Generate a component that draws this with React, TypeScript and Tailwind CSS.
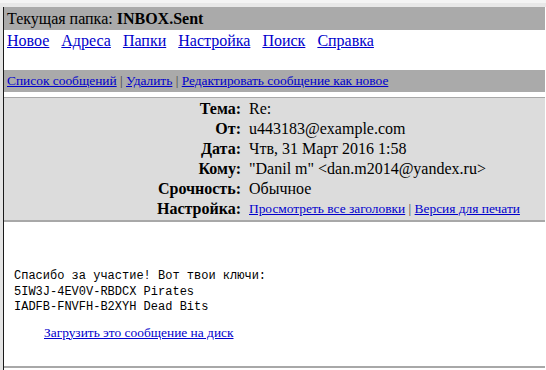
import React from "react";

const serif = { fontFamily: '"Liberation Serif", "Times New Roman", serif' };

function Row({ label, children }: { label: string; children: React.ReactNode }) {
  return (
    <div className="flex h-5 items-center leading-5 pt-[1px]">
      <div className="w-[237px] shrink-0 text-right font-bold">{label}</div>
      <div className="pl-[8px] whitespace-nowrap">{children}</div>
    </div>
  );
}

export default function App() {
  const link = "text-[#0000cc] underline";
  return (
    <div className="w-[546px] h-[370px] bg-white overflow-hidden text-black" style={serif}>
      <div className="h-[7px] bg-[#e8e8e8] border-t-[3px] border-[#f4f4f4]" />
      <div className="flex h-[363px]">
        <div className="w-[3px] bg-[#e4e4e4] shrink-0" />
        <div className="w-[1px] bg-[#1a1a1a] shrink-0" />
        <div className="flex-1 flex flex-col mr-[1px]">
          <div className="h-[23px] bg-[#aaaaaa] pl-[3px] text-[16px] leading-[23px]">
            Текущая папка: <b>INBOX.Sent</b>
          </div>
          <div className="h-[40px] pl-[3px] pt-[2px] text-[16px] leading-[18px] flex gap-[12px]">
            <a className={link}>Новое</a>
            <a className={link}>Адреса</a>
            <a className={link}>Папки</a>
            <a className={link}>Настройка</a>
            <a className={link}>Поиск</a>
            <a className={link}>Справка</a>
          </div>
          <div className="h-[22px] bg-[#aaaaaa] pl-[3px] text-[13.4px] leading-[22px] whitespace-nowrap">
            <a className={link}>Список сообщений</a>
            <span className="text-[#444]"> | </span>
            <a className={link}>Удалить</a>
            <span className="text-[#444]"> | </span>
            <a className={link}>Редактировать сообщение как новое</a>
          </div>
          <div className="h-[5px]" />
          <div className="h-[125px] bg-[#dcdcdc] border-t border-b-2 border-[#a8a8a8] text-[16px]">
            <Row label="Тема:">Re:</Row>
            <Row label="От:">u443183@example.com</Row>
            <Row label="Дата:">Чтв, 31 Март 2016 1:58</Row>
            <Row label="Кому:">"Danil m" &lt;dan.m2014@yandex.ru&gt;</Row>
            <Row label="Срочность:">Обычное</Row>
            <Row label="Настройка:">
              <span className="text-[13.4px]">
                <a className={link}>Просмотреть все заголовки</a>
                <span className="text-[#444]"> | </span>
                <a className={link}>Версия для печати</a>
              </span>
            </Row>
          </div>
          <div className="flex-1 border-b-2 border-[#a8a8a8] pt-[47px]">
            <pre
              className="pl-[10px] text-[12px] leading-[15.5px] m-0"
              style={{ fontFamily: '"Liberation Mono", "DejaVu Sans Mono", monospace' }}
            >
{`Спасибо за участие! Вот твои ключи:
5IW3J-4EV0V-RBDCX Pirates
IADFB-FNVFH-B2XYH Dead Bits`}
            </pre>
            <div className="pl-[40px] mt-[9px] text-[13.4px] leading-[16px]">
              <a className={link}>Загрузить это сообщение на диск</a>
            </div>
          </div>
          <div className="h-[2px]" />
        </div>
      </div>
    </div>
  );
}
